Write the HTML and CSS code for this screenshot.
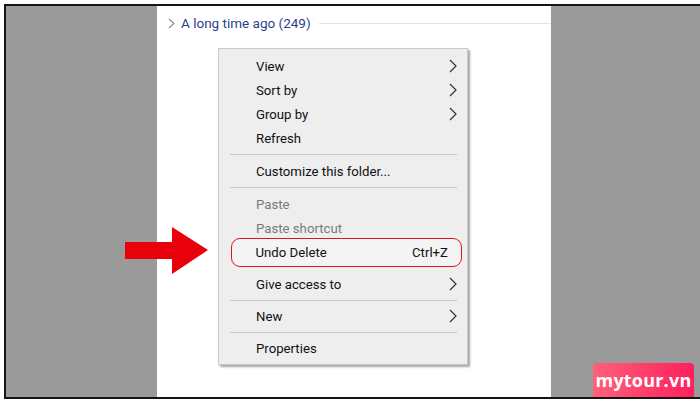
FILE: index.html
```html
<!DOCTYPE html>
<html lang="en">
<head>
  <meta charset="UTF-8" />
  <title>Undo Delete</title>
  <link rel="stylesheet" href="styles.css">
</head>
<body>
  <div class="frame">
    <div class="side"></div>
    <div class="explorer">
      <div class="group">
        <svg class="group-chev" width="7" height="11" viewBox="0 0 7 11"><path d="M1 1 L6 5.5 L1 10" fill="none" stroke="#8a8a8a" stroke-width="1.1"/></svg>
        <span class="group-name">A long time ago (249)</span>
        <span class="group-line"></span>
      </div>

      <!-- context menu -->
      <div class="menu">
        <div class="item">View<svg class="chev" width="8" height="14" viewBox="0 0 8 14"><path d="M1 1 L7 7 L1 13" fill="none" stroke="#333" stroke-width="1.2"/></svg></div>
        <div class="item">Sort by<svg class="chev" width="8" height="14" viewBox="0 0 8 14"><path d="M1 1 L7 7 L1 13" fill="none" stroke="#333" stroke-width="1.2"/></svg></div>
        <div class="item">Group by<svg class="chev" width="8" height="14" viewBox="0 0 8 14"><path d="M1 1 L7 7 L1 13" fill="none" stroke="#333" stroke-width="1.2"/></svg></div>
        <div class="item">Refresh</div>
        <div class="sep"></div>
        <div class="item">Customize this folder...</div>
        <div class="sep"></div>
        <div class="item disabled">Paste</div>
        <div class="item disabled">Paste shortcut</div>
        <div class="item undo">Undo Delete<span class="key">Ctrl+Z</span></div>
        <div class="item">Give access to<svg class="chev" width="8" height="14" viewBox="0 0 8 14"><path d="M1 1 L7 7 L1 13" fill="none" stroke="#333" stroke-width="1.2"/></svg></div>
        <div class="sep tight"></div>
        <div class="item">New<svg class="chev" width="8" height="14" viewBox="0 0 8 14"><path d="M1 1 L7 7 L1 13" fill="none" stroke="#333" stroke-width="1.2"/></svg></div>
        <div class="sep tight"></div>
        <div class="item">Properties</div>
      </div>
    </div>
    <div class="side wide"></div>
  </div>

  <svg class="arrow" width="84" height="48" viewBox="0 0 84 48"><path d="M0 15 H47 V0 L83 23 L47 47 V32 H0 Z" fill="#e8000b"/></svg>

  <div class="badge">mytour.vn</div>
</body>
</html>
```

FILE: styles.css
```css
body {
  margin: 0;
  width: 700px;
  height: 405px;
  overflow: hidden;
  background: #fff;
  font-family: Roboto, "Noto Sans", Arial, sans-serif;
  position: relative;
}
.frame {
  margin: 4px 0 0 4px;
  height: 391px;
  width: 720px;
  border: 2px solid #141414;
  border-right: none;
  display: flex;
}
.side {
  width: 151px;
  background: #9a9a9a;
}
.side.wide {
  flex: 1;
}
.explorer {
  width: 394px;
  background: #fff;
  position: relative;
}
.group {
  display: flex;
  align-items: center;
  height: 34px;
  padding-left: 11px;
}
.group-chev {
  margin-right: 6px;
}
.group-name {
  color: #2a3f8f;
  font-size: 13.5px;
}
.group-line {
  flex: 1;
  height: 1px;
  background: #e3e3e3;
  margin-left: 8px;
  margin-top: 1px;
}
.menu {
  position: absolute;
  left: 61px;
  top: 42px;
  width: 248px;
  padding: 5px 0 4px;
  background: #eeeeee;
  border: 1px solid #c9c9c9;
  box-shadow: 2px 2px 2px rgba(0, 0, 0, 0.35);
}
.item {
  display: flex;
  align-items: center;
  justify-content: space-between;
  height: 24px;
  padding: 0 10px 0 37px;
  font-size: 13.2px;
  color: #111;
}
.item.disabled {
  color: #7a7a7a;
}
.item.undo {
  box-sizing: border-box;
  margin: -2px 5px 5px 12px;
  height: 29px;
  padding: 0 13px 0 23.5px;
  border: 1.5px solid #e1141e;
  border-radius: 9px;
  background: #f4f4f4;
}
.sep {
  height: 1px;
  background: #c8c8c8;
  margin: 4px 10px 4px 11px;
}
.sep.tight {
  margin-bottom: 3px;
}
.arrow {
  position: absolute;
  left: 125px;
  top: 227px;
}
.badge {
  position: absolute;
  left: 593px;
  top: 363px;
  width: 101px;
  height: 34px;
  border-radius: 4px 4px 0 0;
  background: linear-gradient(90deg, #ff6078, #ff1f5e);
  color: #fff;
  font-family: "Open Sans", sans-serif;
  font-weight: 700;
  font-size: 18px;
  line-height: 34px;
  text-align: center;
  letter-spacing: 0.2px;
}
```
